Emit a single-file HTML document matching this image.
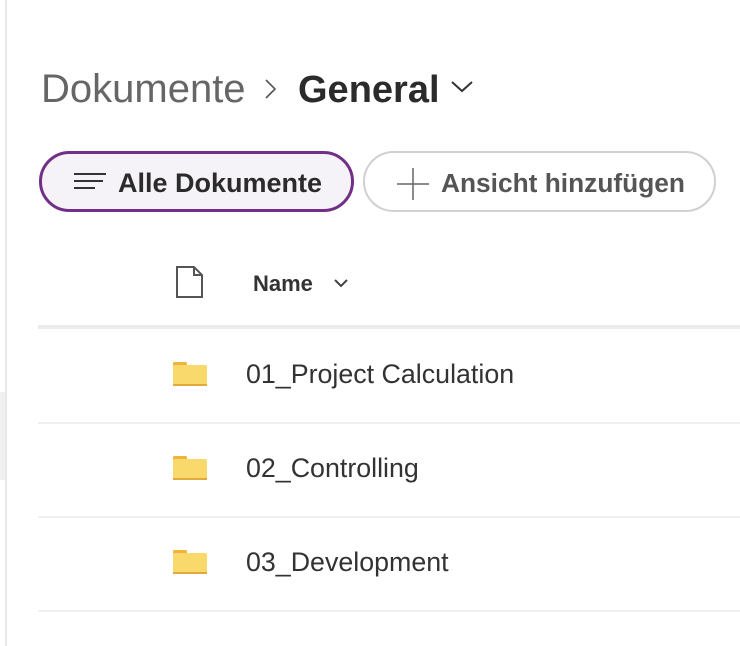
<!DOCTYPE html>
<html><head><meta charset="utf-8"><style>
html,body{margin:0;padding:0;background:#fff;width:740px;height:646px;overflow:hidden;position:relative;font-family:"Liberation Sans",sans-serif;}
.a{position:absolute;white-space:nowrap;}
.sep{position:absolute;left:38px;right:0;background:#efefef;}
</style></head><body>
<div class="a" style="left:5px;top:0;width:2px;height:646px;background:#e8e8e8"></div>
<div class="a" style="left:0;top:392px;width:5px;height:88px;background:#f0f0f0"></div>

<div class="a" style="left:41px;top:66px;font-size:40px;color:#666;line-height:46px">Dokumente</div>
<svg class="a" style="left:263px;top:78px" width="16" height="22"><path d="M3 2 L12 11 L3 20" fill="none" stroke="#555" stroke-width="1.6"/></svg>
<div class="a" style="left:298px;top:67px;font-size:38px;font-weight:bold;color:#2b2b2b;line-height:46px">General</div>
<svg class="a" style="left:450px;top:80px" width="24" height="14"><path d="M2 2 L12 11 L22 2" fill="none" stroke="#333" stroke-width="2"/></svg>

<div class="a" style="left:39px;top:151px;width:309px;height:55px;border:3px solid #722f87;border-radius:31px;background:#f6f3f8"></div>
<svg class="a" style="left:73px;top:172px" width="34" height="20"><path d="M1 2H33M1 9H30M1 16H22" stroke="#333" stroke-width="2"/></svg>
<div class="a" style="left:118px;top:167px;font-size:27px;font-weight:bold;color:#2b2b2b;line-height:32px">Alle Dokumente</div>

<div class="a" style="left:363px;top:151px;width:349px;height:57px;border:2px solid #d0d0d0;border-radius:31px;background:#fff"></div>
<svg class="a" style="left:396px;top:167px" width="34" height="34"><path d="M17 1V33M1 17H33" stroke="#666" stroke-width="1.5"/></svg>
<div class="a" style="left:441px;top:167px;font-size:26.3px;font-weight:bold;color:#555;line-height:32px">Ansicht hinzufügen</div>

<svg class="a" style="left:175px;top:265px" width="30" height="34"><path d="M2 2H19L27 10V32H2Z M19 2V10H27" fill="#fff" stroke="#555" stroke-width="2" stroke-linejoin="miter"/></svg>
<div class="a" style="left:253px;top:271px;font-size:22px;font-weight:bold;color:#333;line-height:26px">Name</div>
<svg class="a" style="left:333px;top:278px" width="16" height="10"><path d="M2 2L8 8L14 2" fill="none" stroke="#444" stroke-width="2"/></svg>

<div class="sep" style="top:325px;height:4px;background:#ebebeb"></div>

<div class="a" style="left:172px;top:361px"><svg width="36" height="26"><rect x="1" y="1" width="14" height="6" rx="1.5" fill="#eeb53a"/><rect x="1" y="4" width="34" height="21" rx="1.5" fill="#f9d96c"/><rect x="1" y="23" width="34" height="2" fill="#e3a93a"/></svg></div>
<div class="a" style="left:246px;top:359px;font-size:26.8px;color:#333;line-height:30px">01_Project Calculation</div>
<div class="sep" style="top:422px;height:2px"></div>

<div class="a" style="left:172px;top:455px"><svg width="36" height="26"><rect x="1" y="1" width="14" height="6" rx="1.5" fill="#eeb53a"/><rect x="1" y="4" width="34" height="21" rx="1.5" fill="#f9d96c"/><rect x="1" y="23" width="34" height="2" fill="#e3a93a"/></svg></div>
<div class="a" style="left:246px;top:453px;font-size:26.8px;color:#333;line-height:30px">02_Controlling</div>
<div class="sep" style="top:516px;height:2px"></div>

<div class="a" style="left:172px;top:549px"><svg width="36" height="26"><rect x="1" y="1" width="14" height="6" rx="1.5" fill="#eeb53a"/><rect x="1" y="4" width="34" height="21" rx="1.5" fill="#f9d96c"/><rect x="1" y="23" width="34" height="2" fill="#e3a93a"/></svg></div>
<div class="a" style="left:246px;top:547px;font-size:26.8px;color:#333;line-height:30px">03_Development</div>
<div class="sep" style="top:610px;height:2px"></div>
</body></html>
